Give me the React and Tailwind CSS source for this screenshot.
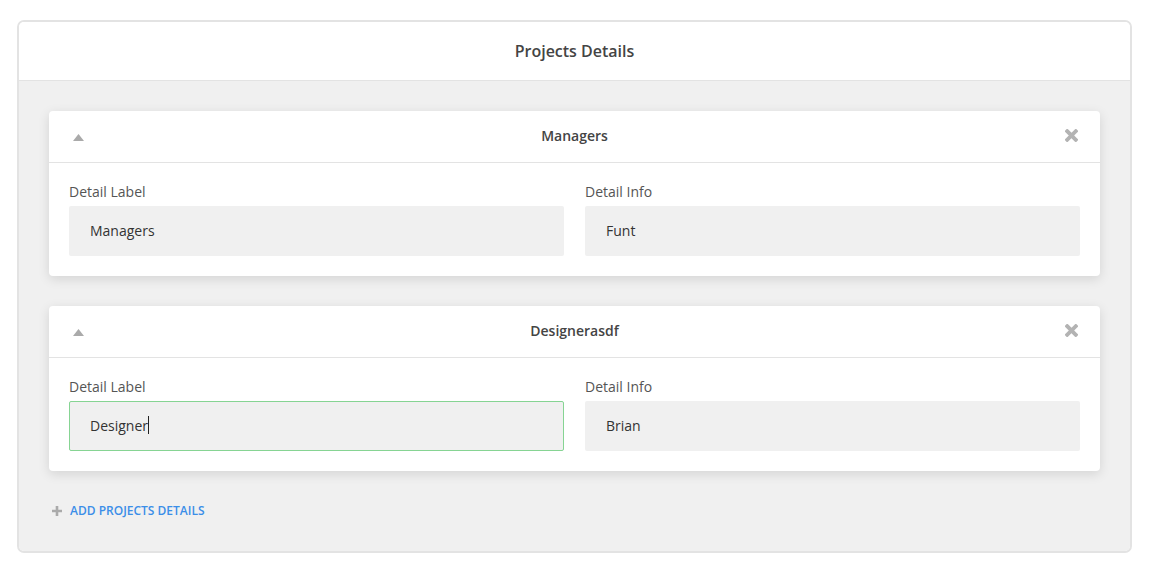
import React from "react";

function Triangle() {
  return (
    <svg width="11" height="7" viewBox="0 0 11 7" className="block mt-[3px]">
      <path d="M5.5 0 L11 7 L0 7 Z" fill="#aaaaaa" />
    </svg>
  );
}

function CloseIcon() {
  return (
    <svg width="13" height="13" viewBox="0 0 13 13" className="block">
      <path d="M2.2 2.2 L10.8 10.8 M10.8 2.2 L2.2 10.8" stroke="#b3b3b3" strokeWidth="3.8" strokeLinecap="square" />
    </svg>
  );
}

function PlusIcon() {
  return (
    <svg width="10" height="10" viewBox="0 0 10 10" className="block">
      <path d="M5 0 V10 M0 5 H10" stroke="#aaaaaa" strokeWidth="2.6" />
    </svg>
  );
}

function Field({ label, value, focused }) {
  return (
    <div className="flex-1 min-w-0 flex flex-col">
      <div className="h-5 leading-5 text-[14px] text-[#555]">{label}</div>
      <div
        className={
          "mt-[4px] h-[50px] rounded-[2px] bg-[#f0f0f0] flex items-center pb-[2px] text-[14px] text-[#333] " +
          (focused ? "border border-[#86d493] pl-[20px]" : "pl-[21px]")
        }
      >
        <span>{value}</span>
        {focused && <span className="inline-block w-px h-[18px] bg-[#222]" />}
      </div>
    </div>
  );
}

function Card({ title, label, info, focused }) {
  return (
    <div className="bg-white rounded-[4px] shadow-[0_3px_12px_rgba(0,0,0,0.12)]">
      <div className="h-[52px] border-b border-[#e3e3e3] flex items-center pl-[24px] pr-[22px] pb-[2px]">
        <Triangle />
        <div className="flex-1 text-center text-[14px] font-semibold text-[#444]">{title}</div>
        <CloseIcon />
      </div>
      <div className="pt-[19px] pb-[20px] px-[20px] flex gap-[21px]">
        <Field label="Detail Label" value={label} focused={focused} />
        <Field label="Detail Info" value={info} />
      </div>
    </div>
  );
}

export default function App() {
  return (
    <div
      className="w-[1149px] h-[575px] bg-white pt-[20px] px-[17px]"
      style={{ fontFamily: '"Open Sans", "Noto Sans", sans-serif' }}
    >
      <div className="w-[1115px] border-2 border-[#e3e3e3] rounded-[7px] overflow-hidden">
        <div className="h-[59px] bg-white border-b border-[#e3e3e3] flex items-center justify-center text-[16px] font-semibold text-[#444]">
          Projects Details
        </div>
        <div className="bg-[#f0f0f0] px-[30px] pt-[30px] pb-[31px]">
          <div className="flex flex-col gap-[30px]">
            <Card title="Managers" label="Managers" info="Funt" />
            <Card title="Designerasdf" label="Designer" info="Brian" focused />
          </div>
          <div className="mt-[30px] h-[19px] flex items-center ml-[3px] gap-[8px]">
            <PlusIcon />
            <span className="text-[12px] font-semibold text-[#3b8ee8]">ADD PROJECTS DETAILS</span>
          </div>
        </div>
      </div>
    </div>
  );
}
